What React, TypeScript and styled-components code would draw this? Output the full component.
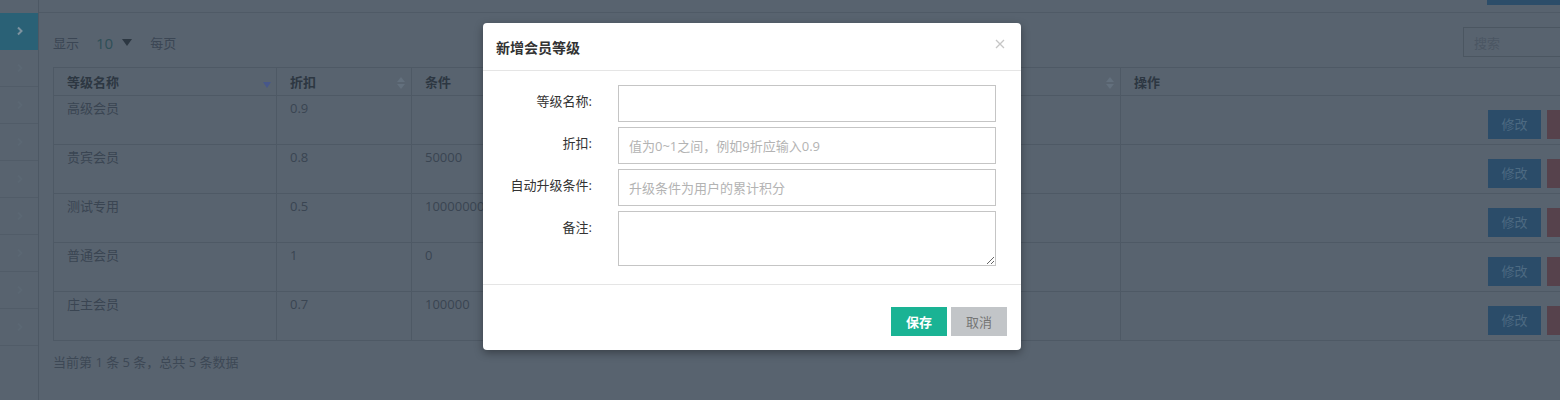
import React from "react";
import styled, { createGlobalStyle } from "styled-components";

const Global = createGlobalStyle`
  html, body { margin: 0; padding: 0; }
  body {
    width: 1560px;
    height: 400px;
    overflow: hidden;
    background: #58636f;
    font-family: "Open Sans", "Noto Sans CJK SC", sans-serif;
    font-size: 13px;
    color: #3a4450;
  }
  * { box-sizing: border-box; }
`;

const Page = styled.div`
  display: flex;
  width: 1560px;
  height: 400px;
  overflow: hidden;
  position: relative;
`;

const Sidebar = styled.nav`
  width: 39px;
  flex: none;
  border-right: 1px solid #4d5864;
  padding-top: 13px;
  display: flex;
  flex-direction: column;
`;

const SideItem = styled.div<{ $active?: boolean }>`
  height: 37px;
  display: flex;
  align-items: center;
  justify-content: center;
  padding-left: 2px;
  background: ${(p) => (p.$active ? "#2a6176" : "transparent")};
  border-bottom: 1px solid ${(p) => (p.$active ? "#2a6176" : "#515c68")};
  color: ${(p) => (p.$active ? "#7d929f" : "#5b6773")};
`;

const Main = styled.main`
  flex: 1;
  min-width: 0;
  overflow: hidden;
  display: flex;
  flex-direction: column;
`;

const TopBar = styled.div`
  height: 13px;
  border-bottom: 1px solid #4f5a66;
  display: flex;
  justify-content: flex-end;
  align-items: flex-end;
  padding-bottom: 7px;
`;

const TopButton = styled.div`
  width: 80px;
  height: 6px;
  margin-right: -7px;
  background: #2c4d69;
`;

const Content = styled.div`
  padding: 14px 0 0 14px;
  width: 1580px;
`;

const Toolbar = styled.div`
  display: flex;
  align-items: center;
  justify-content: space-between;
  height: 30px;
`;

const LengthCtl = styled.div`
  display: flex;
  align-items: center;
  color: #3b4654;
  font-size: 13px;
  padding-top: 1px;
`;

const LengthValue = styled.span`
  color: #2f4f57;
  font-size: 15px;
  margin-left: 17px;
  margin-right: 9px;
`;

const Caret = styled.span`
  display: inline-block;
  width: 0;
  height: 0;
  border-left: 5px solid transparent;
  border-right: 5px solid transparent;
  border-top: 7px solid #2c3742;
  margin-right: 18px;
`;

const Search = styled.div`
  width: 136px;
  height: 30px;
  border: 1px solid #4b5661;
  margin-right: 20px;
  padding: 0 10px;
  display: flex;
  align-items: center;
  color: #4b5663;
  font-size: 13px;
`;

const Table = styled.table`
  margin-top: 10px;
  width: 1557px;
  border-collapse: collapse;
  table-layout: fixed;
  border: 1px solid #4e5965;
`;

const Th = styled.th<{ $w: number }>`
  width: ${(p) => p.$w}px;
  height: 28px;
  padding: 0 13px;
  text-align: left;
  font-weight: bold;
  font-size: 13px;
  color: #2d3742;
  border: 1px solid #4e5965;
  position: relative;
`;

const SortBoth = styled.span`
  position: absolute;
  right: 6px;
  top: 9px;
  display: flex;
  flex-direction: column;
  gap: 2px;
  &::before, &::after {
    content: "";
    width: 0;
    height: 0;
    border-left: 4px solid transparent;
    border-right: 4px solid transparent;
  }
  &::before { border-bottom: 5px solid #63707d; }
  &::after { border-top: 5px solid #63707d; }
`;

const SortDesc = styled.span`
  position: absolute;
  right: 5px;
  top: 14px;
  width: 0;
  height: 0;
  border-left: 4px solid transparent;
  border-right: 4px solid transparent;
  border-top: 6px solid #47578a;
`;

const Td = styled.td`
  height: 49px;
  padding: 3px 13px 0;
  vertical-align: top;
  border: 1px solid #4e5965;
  color: #3a4552;
  font-size: 13px;
  white-space: nowrap;
  overflow: hidden;
  line-height: 18px;
`;

const ActionCell = styled(Td)`
  padding: 14px 10px 0 0;
  text-align: right;
`;

const ActBtn = styled.span<{ $kind: "edit" | "del" }>`
  display: inline-block;
  width: 53px;
  height: 29px;
  line-height: 29px;
  text-align: center;
  margin-left: 6px;
  background: ${(p) => (p.$kind === "edit" ? "#2b4c69" : "#56424c")};
  color: ${(p) => (p.$kind === "edit" ? "#4d6a82" : "#715d67")};
  font-size: 13px;
`;

const Info = styled.div`
  margin-top: 11px;
  color: #3d4855;
  font-size: 13px;
`;

const Modal = styled.div`
  position: absolute;
  left: 483px;
  top: 23px;
  width: 538px;
  background: #fff;
  border-radius: 4px;
  box-shadow: 0 3px 9px rgba(0, 0, 0, 0.35);
  color: #333;
`;

const ModalHeader = styled.div`
  height: 48px;
  padding: 0 14px 0 13px;
  border-bottom: 1px solid #e5e5e5;
  display: flex;
  align-items: center;
  justify-content: space-between;
`;

const ModalTitle = styled.h4`
  margin: 0;
  font-size: 14px;
  font-weight: bold;
  color: #333;
  padding-top: 1px;
`;

const Close = styled.span`
  display: flex;
  margin-right: 2px;
  margin-top: -5px;
`;

const ModalBody = styled.div`
  padding: 14px 0 18px;
  display: grid;
  grid-template-columns: 109px 378px;
  column-gap: 26px;
  row-gap: 5px;
`;

const Label = styled.label`
  text-align: right;
  padding-top: 6px;
  line-height: 20px;
  font-size: 13px;
  color: #333;
`;

const Input = styled.input`
  height: 37px;
  width: 100%;
  border: 1px solid #c5c5c5;
  border-radius: 0;
  padding: 0 10px;
  font-family: inherit;
  font-size: 13px;
  color: #333;
  outline: none;
  &::placeholder { color: #b3b3b3; }
`;

const TextArea = styled.textarea`
  height: 55px;
  width: 100%;
  border: 1px solid #c5c5c5;
  border-radius: 0;
  padding: 6px 10px;
  font-family: inherit;
  font-size: 13px;
  outline: none;
  display: block;
`;

const ModalFooter = styled.div`
  border-top: 1px solid #e5e5e5;
  padding: 22px 14px 14px;
  display: flex;
  justify-content: flex-end;
  gap: 4px;
`;

const Btn = styled.button<{ $primary?: boolean }>`
  width: 56px;
  height: 29px;
  border: none;
  border-radius: 0;
  font-family: inherit;
  font-size: 13px;
  font-weight: ${(p) => (p.$primary ? "bold" : "normal")};
  background: ${(p) => (p.$primary ? "#1ab394" : "#c2c5c8")};
  color: ${(p) => (p.$primary ? "#fff" : "#757575")};
  padding: 0;
  cursor: pointer;
`;

const Chevron = () => (
  <svg width="8" height="10" viewBox="0 0 8 10">
    <path d="M2 1.5 L5.5 5 L2 8.5" fill="none" stroke="currentColor" strokeWidth="2" />
  </svg>
);

const rows = [
  { name: "高级会员", rate: "0.9", cond: "" },
  { name: "贵宾会员", rate: "0.8", cond: "50000" },
  { name: "测试专用", rate: "0.5", cond: "100000000" },
  { name: "普通会员", rate: "1", cond: "0" },
  { name: "庄主会员", rate: "0.7", cond: "100000" },
];

export default function App() {
  return (
    <>
      <Global />
      <Page>
        <Sidebar>
          <SideItem $active>
            <Chevron />
          </SideItem>
          {Array.from({ length: 8 }).map((_, i) => (
            <SideItem key={i}>
              <Chevron />
            </SideItem>
          ))}
        </Sidebar>
        <Main>
          <TopBar>
            <TopButton />
          </TopBar>
          <Content>
            <Toolbar>
              <LengthCtl>
                显示<LengthValue>10</LengthValue>
                <Caret />
                每页
              </LengthCtl>
              <Search>搜索</Search>
            </Toolbar>
            <Table>
              <thead>
                <tr>
                  <Th $w={223}>
                    等级名称
                    <SortDesc />
                  </Th>
                  <Th $w={135}>
                    折扣
                    <SortBoth />
                  </Th>
                  <Th $w={350}>
                    条件
                    <SortBoth />
                  </Th>
                  <Th $w={359}>
                    备注
                    <SortBoth />
                  </Th>
                  <Th $w={490}>操作</Th>
                </tr>
              </thead>
              <tbody>
                {rows.map((r) => (
                  <tr key={r.name}>
                    <Td>{r.name}</Td>
                    <Td>{r.rate}</Td>
                    <Td>{r.cond}</Td>
                    <Td></Td>
                    <ActionCell>
                      <ActBtn $kind="edit">修改</ActBtn>
                      <ActBtn $kind="del">删除</ActBtn>
                    </ActionCell>
                  </tr>
                ))}
              </tbody>
            </Table>
            <Info>当前第 1 条 5 条，总共 5 条数据</Info>
          </Content>
        </Main>
        <Modal>
          <ModalHeader>
            <ModalTitle>新增会员等级</ModalTitle>
            <Close>
              <svg width="10" height="10" viewBox="0 0 10 10">
                <path d="M1 1 L9 9 M9 1 L1 9" stroke="#c6c6c6" strokeWidth="1.3" fill="none" />
              </svg>
            </Close>
          </ModalHeader>
          <ModalBody>
            <Label>等级名称:</Label>
            <Input />
            <Label>折扣:</Label>
            <Input placeholder="值为0~1之间，例如9折应输入0.9" />
            <Label>自动升级条件:</Label>
            <Input placeholder="升级条件为用户的累计积分" />
            <Label>备注:</Label>
            <TextArea />
          </ModalBody>
          <ModalFooter>
            <Btn $primary>保存</Btn>
            <Btn>取消</Btn>
          </ModalFooter>
        </Modal>
      </Page>
    </>
  );
}
